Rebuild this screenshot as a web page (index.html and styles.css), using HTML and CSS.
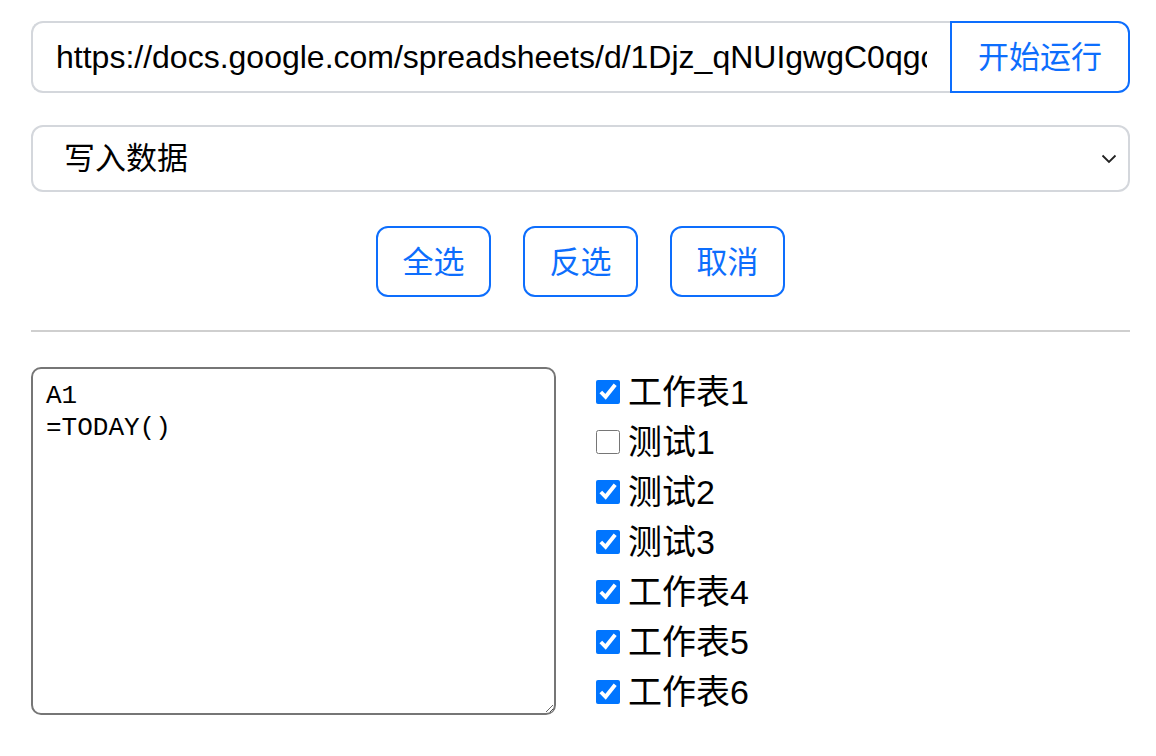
FILE: index.html
```html
<!DOCTYPE html>
<html lang="zh-CN">
<head>
    <meta charset="UTF-8">
    <meta name="viewport" content="width=device-width, initial-scale=1.0">
    <title>批量写入表格</title>
    <link rel="stylesheet" href="styles.css">
</head>
<body>
<div class="container">
    <div class="url-group">
        <input type="text" class="url-input" value="https://docs.google.com/spreadsheets/d/1Djz_qNUIgwgC0qgcXk2lR7vT9sYp3mQwE4aF/edit">
        <button class="btn run-btn">开始运行</button>
    </div>

    <select class="mode-select">
        <option>写入数据</option>
        <option>读取数据</option>
        <option>清除数据</option>
    </select>

    <div class="actions">
        <button class="btn">全选</button>
        <button class="btn">反选</button>
        <button class="btn">取消</button>
    </div>

    <hr class="divider">

    <div class="workspace">
        <textarea class="formula" spellcheck="false">A1
=TODAY()</textarea>
        <div class="sheets">
            <label class="sheet"><input type="checkbox" checked>工作表1</label>
            <label class="sheet"><input type="checkbox">测试1</label>
            <label class="sheet"><input type="checkbox" checked>测试2</label>
            <label class="sheet"><input type="checkbox" checked>测试3</label>
            <label class="sheet"><input type="checkbox" checked>工作表4</label>
            <label class="sheet"><input type="checkbox" checked>工作表5</label>
            <label class="sheet"><input type="checkbox" checked>工作表6</label>
        </div>
    </div>
</div>
</body>
</html>
```

FILE: styles.css
```css
body {
    font-family: "Liberation Sans", "Noto Sans CJK SC", sans-serif;
    background-color: #fff;
    color: #000;
    margin: 0;
    padding: 0;
}
.container {
    padding: 21px 26px 0 31px;
}
.url-group {
    display: flex;
    height: 72px;
}
.url-input {
    flex: 1;
    min-width: 0;
    box-sizing: border-box;
    height: 100%;
    padding: 0 23px;
    font-family: "Liberation Sans", "Noto Sans CJK SC", sans-serif;
    font-size: 32px;
    color: #000;
    border: 2px solid #d4d7dc;
    border-right: none;
    border-radius: 12px 0 0 12px;
    outline: none;
}
.btn {
    box-sizing: border-box;
    background: #fff;
    color: #0d6efd;
    border: 2px solid #0d6efd;
    border-radius: 12px;
    font-family: "Liberation Sans", "Noto Sans CJK SC", sans-serif;
    font-size: 31px;
    padding: 0 0 4px;
    cursor: pointer;
}
.run-btn {
    width: 180px;
    height: 100%;
    padding-bottom: 6px;
    border-radius: 0 12px 12px 0;
}
.mode-select {
    display: block;
    width: 100%;
    height: 67px;
    margin-top: 32px;
    padding: 0 31px;
    box-sizing: border-box;
    appearance: none;
    font-family: "Liberation Sans", "Noto Sans CJK SC", sans-serif;
    font-size: 31px;
    color: #000;
    background: #fff url("data:image/svg+xml,%3Csvg xmlns='http://www.w3.org/2000/svg' width='16' height='10' viewBox='0 0 16 10'%3E%3Cpath d='M1.5 1.5 8 8l6.5-6.5' fill='none' stroke='%23222' stroke-width='1.8'/%3E%3C/svg%3E") no-repeat right 11px center;
    border: 2px solid #d4d7dc;
    border-radius: 12px;
    outline: none;
}
.actions {
    display: flex;
    justify-content: center;
    gap: 32px;
    margin-top: 34px;
}
.actions .btn {
    width: 115px;
    height: 71px;
}
.divider {
    border: none;
    border-top: 2px solid #cfcfcf;
    margin: 33px 0 35px;
}
.workspace {
    display: flex;
    gap: 40px;
}
.formula {
    width: 525px;
    height: 348px;
    box-sizing: border-box;
    padding: 11px 13px;
    font-family: "Liberation Mono", monospace;
    font-size: 26px;
    line-height: 32px;
    color: #000;
    border: 2px solid #767676;
    border-radius: 10px;
    outline: none;
}
.sheets {
    display: flex;
    flex-direction: column;
}
.sheet {
    display: flex;
    align-items: center;
    height: 50px;
    font-size: 34px;
    line-height: 1;
}
.sheet input {
    width: 24px;
    height: 24px;
    margin: 0 8px 0 0;
}
```
